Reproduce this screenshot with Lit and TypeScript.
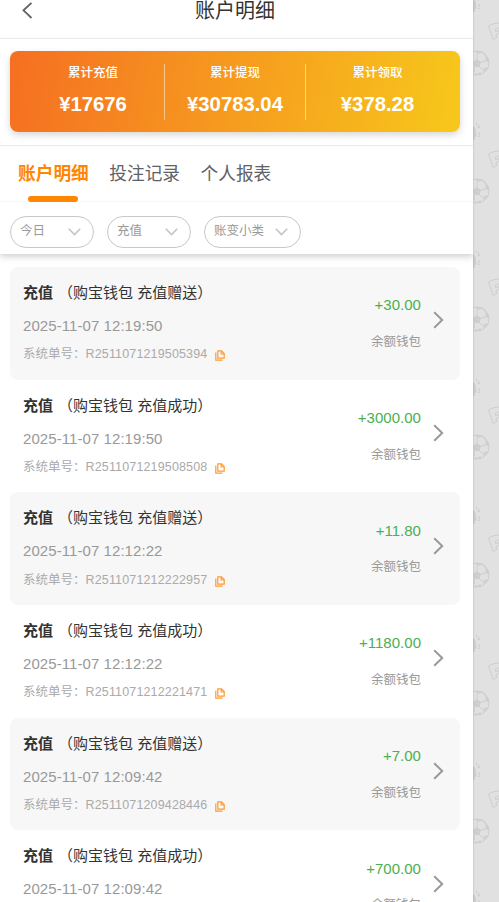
import { LitElement, html, css, svg } from "lit";
import { customElement } from "lit/decorators.js";

interface Entry { note: string; time: string; id: string; amount: string; }

const totals = [
  { label: "累计充值", value: "¥17676" },
  { label: "累计提现", value: "¥30783.04" },
  { label: "累计领取", value: "¥378.28" },
];
const tabs = ["账户明细", "投注记录", "个人报表"];
const filters = ["今日", "充值", "账变小类"];
const entries: Entry[] = [
  { note: "充值赠送", time: "2025-11-07 12:19:50", id: "R2511071219505394", amount: "+30.00" },
  { note: "充值成功", time: "2025-11-07 12:19:50", id: "R2511071219508508", amount: "+3000.00" },
  { note: "充值赠送", time: "2025-11-07 12:12:22", id: "R2511071212222957", amount: "+11.80" },
  { note: "充值成功", time: "2025-11-07 12:12:22", id: "R2511071212221471", amount: "+1180.00" },
  { note: "充值赠送", time: "2025-11-07 12:09:42", id: "R2511071209428446", amount: "+7.00" },
  { note: "充值成功", time: "2025-11-07 12:09:42", id: "", amount: "+700.00" },
];

const tiles = [0, 1, 2, 3, 4, 5, 6, 7];

@customElement("app-root")
export class AppRoot extends LitElement {
  static styles = css`
    :host {
      display: flex; height: 902px; overflow: hidden; background: #e1e1e1;
      font-family: "Liberation Sans", "Noto Sans CJK SC", sans-serif;
    }
    * { box-sizing: border-box; }
    svg { display: block; flex: none; }
    .page { width: 473px; flex: none; height: 902px; overflow: hidden; background: #fff; box-shadow: 0 0 2px rgba(0,0,0,.22); z-index: 1; }
    .side { width: 26px; flex: none; }
    .header {
      height: 39px; border-bottom: 1px solid #ebebeb; display: grid;
      grid-template-columns: 60px 1fr 63px; align-items: start;
    }
    .back { margin: 2px 0 0 22px; }
    .title { text-align: center; font-size: 20px; line-height: 22px; color: #333; }
    .summary { padding: 12px 13px 13px 10px; border-bottom: 1px solid #ebebeb; height: 107px; }
    .card {
      height: 81px; border-radius: 8px; display: grid; padding: 13px 11px 12px 13px; grid-template-columns: 142px 141px 1fr;
      background: linear-gradient(100deg, #f56f22, #f7c81b); color: #fff; text-align: center;
      box-shadow: 0 3px 7px rgba(0,0,0,.16);
    }
    .total { border-right: 1px solid rgba(255,255,255,.5); }
    .total:first-child { padding-right: 1px; }
    .total:last-child { border-right: 0; }
    .total-label { font-size: 12.5px; line-height: 18px; font-weight: 500; }
    .total-value { font-size: 20.3px; line-height: 24px; font-weight: 700; margin-top: 10px; }
    .tabs { display: flex; gap: 20.5px; height: 56px; padding: 0 18px; border-bottom: 1px solid #f7f7f7; }
    .tab {
      font-size: 17.7px; line-height: 56px; color: #606266; height: 56px;
      display: flex; flex-direction: column; align-items: center;
    }
    .tab.active { color: #ff8600; font-weight: 700; }
    .bar { width: 50px; height: 6px; border-radius: 3px; background: #ff8600; margin-top: -6px; flex: none; }
    .filters { display: flex; gap: 13px; height: 52px; padding: 14px 10px 0; box-shadow: 0 2px 7px rgba(0,0,0,.22); clip-path: inset(0 0 -14px 0); }
    .pill {
      height: 32px; border: 1px solid #c8c8c8; border-radius: 16px; padding: 0 12px 0 9px; min-width: 84px;
      display: flex; justify-content: space-between; align-items: center; gap: 11px;
      font-size: 12.5px; color: #999;
    }
    .pill-text { line-height: 18px; margin-top: -3px; }
    .list { padding: 13px 13px 0 10px; }
    .entry {
      height: 112.7px; border-radius: 8px; padding: 0 16px 0 13px; display: flex;
    }
    .entry:nth-child(odd) { background: #f7f7f7; }
    .info { flex: 1; padding-top: 15px; }
    .name { font-size: 15px; line-height: 22px; color: #333; white-space: pre; }
    .kind { font-weight: 700; margin-right: 5px; }
    .time { font-size: 15px; line-height: 20px; margin-top: 12px; color: #999; letter-spacing: .07px; }
    .serial { font-size: 12.5px; line-height: 18px; margin-top: 9.300px; height: 18px; color: #aaa; display: flex; align-items: center; }
    .code { letter-spacing: .15px; }
    .copy { margin: 3px 0 0 7.500px; }
    .result { text-align: right; padding-top: 28.400px; }
    .amount { font-size: 15px; line-height: 20px; color: #4caf50; letter-spacing: .03px; }
    .wallet { font-size: 12.5px; line-height: 18px; margin-top: 17.600px; color: #999; }
    .go { margin: 44.300px 0 0 12px; }
  `;

  private tile(i: number) {
    return svg`<g transform=${`translate(0 ${i * 128})`} fill="none" stroke="#cecece" stroke-width="1">
      <circle cx="4" cy="63" r="12"/>
      <path d="M4 59l4 3-1.600 5H1.200L0 62z M2 51.500l3 2.500 5-1.500-4-1.500z M12 57l1 4 3 2-.7-5z M11 68l-1 4 2-1 3-4z M1 72l3 2 4-2 0 2-5 1z" fill="#cecece" stroke="none"/>
      <path d="M4 59v-5M8 62l5-1M6.400 67l4 3M1.200 67L1 72M10 52l3 5"/>
      <path d="M15.500 26q4-3 13.500-3v4l-7 2 .5 2.500 3.500-1v3l-3 1 .5 3-3.500 2q-1.500-6-4-11.500z"/>
      <path d="M0-2l2 3 1 7-3 3" fill="#cecece"/>
      <path d="M3-5l1 2M6-3l-1 2M5 0l2-1M6 4v3M5 9l2-1M1 12l1-2" stroke-width="1.300"/>
    </g>`;
  }

  render() {
    return html`
      <main class="page">
        <header class="header">
          <svg class="back" width="11" height="17" viewBox="0 0 11 17" fill="none" stroke="#606266" stroke-width="1.8"><path d="M9.500 .8 1.500 8.300l8 7.700"/></svg>
          <div class="title">账户明细</div>
        </header>
        <section class="summary">
          <div class="card">
            ${totals.map((t) => html`<div class="total"><div class="total-label">${t.label}</div><div class="total-value">${t.value}</div></div>`)}
          </div>
        </section>
        <nav class="tabs">
          ${tabs.map((t, i) => html`<div class="tab ${i === 0 ? "active" : ""}">${t}${i === 0 ? html`<div class="bar"></div>` : ""}</div>`)}
        </nav>
        <div class="filters">
          ${filters.map((f) => html`<div class="pill"><span class="pill-text">${f}</span>
            <svg width="13" height="8" viewBox="0 0 13 8" fill="none" stroke="#c4c4c4" stroke-width="1.600"><path d="M.8 .8l5.700 5.700L12.200 .8"/></svg></div>`)}
        </div>
        <section class="list">
          ${entries.map((e) => html`<article class="entry">
            <div class="info">
              <div class="name"><span class="kind">充值</span>（购宝钱包 ${e.note}）</div>
              <div class="time">${e.time}</div>
              ${e.id ? html`<div class="serial"><span>系统单号：</span><span class="code">${e.id}</span>
                <svg class="copy" width="10" height="11" viewBox="0 0 10 11" fill="none" stroke="#ff9a2e" stroke-width="1.200"><path d="M2.800 .9h3.700l2.700 2.700v4.600H2.800zM6.200 1v3h3M.8 2.500v7.700h6.700"/></svg>
              </div>` : ""}
            </div>
            <div class="result"><div class="amount">${e.amount}</div><div class="wallet">余额钱包</div></div>
            <svg class="go" width="11" height="18" viewBox="0 0 11 18" fill="none" stroke="#999" stroke-width="2"><path d="M1.200 1.200l8 7.800-8 7.800"/></svg>
          </article>`)}
        </section>
      </main>
      <svg class="side" width="26" height="902" viewBox="0 0 26 902">${tiles.map((i) => this.tile(i))}</svg>
    `;
  }
}
